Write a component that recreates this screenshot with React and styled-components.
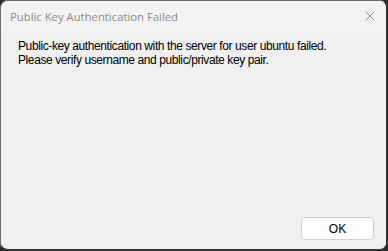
import React from "react";
import styled, { createGlobalStyle } from "styled-components";

const Global = createGlobalStyle`
  html, body { margin: 0; padding: 0; background: #2b2b2b; }
  body { width: 388px; height: 251px; overflow: hidden; }
`;

const Window = styled.div`
  box-sizing: border-box;
  width: 388px;
  height: 251px;
  border-radius: 8px;
  border: 1px solid #6e6e6e;
  border-right: 2px solid #333;
  border-bottom: 2px solid #333;
  background: #f0f0f0;
  overflow: hidden;
  display: flex;
  flex-direction: column;
  font-family: "Open Sans", "Noto Sans", sans-serif;
`;

const TitleBar = styled.div`
  height: 30px;
  flex: none;
  background: #f3f3f3;
  display: flex;
  align-items: center;
  justify-content: space-between;
  padding-left: 9px;
`;

const Title = styled.span`
  font-size: 11.3px;
  color: #8b8b8b;
`;

const CloseButton = styled.div`
  width: 46px;
  height: 30px;
  display: flex;
  align-items: center;
  justify-content: center;
  margin-right: -7px;
`;

const Body = styled.div`
  flex: 1;
  display: flex;
  flex-direction: column;
  padding: 8px 12px 9px 17px;
`;

const Message = styled.p`
  margin: 0;
  font-size: 12px;
  line-height: 14px;
  color: #000;
  font-family: "Liberation Sans", sans-serif;
  letter-spacing: -0.4px;
`;

const Footer = styled.div`
  margin-top: auto;
  display: flex;
  justify-content: flex-end;
`;

const Button = styled.button`
  width: 73px;
  height: 23px;
  border: 1px solid #d0d0d0;
  border-radius: 4px;
  background: #fdfdfd;
  font-family: "Liberation Sans", sans-serif;
  font-size: 12px;
  color: #000;
  padding: 0;
`;

export default function App() {
  return (
    <>
      <Global />
      <Window>
        <TitleBar>
          <Title>Public Key Authentication Failed</Title>
          <CloseButton>
            <svg width="10" height="10" viewBox="0 0 10 10">
              <path d="M0.5 0.5 L9.5 9.5 M9.5 0.5 L0.5 9.5" stroke="#8b8b8b" strokeWidth="1" />
            </svg>
          </CloseButton>
        </TitleBar>
        <Body>
          <Message>
            Public-key authentication with the server for user ubuntu failed.
            <br />
            Please verify username and public/private key pair.
          </Message>
          <Footer>
            <Button>OK</Button>
          </Footer>
        </Body>
      </Window>
    </>
  );
}
